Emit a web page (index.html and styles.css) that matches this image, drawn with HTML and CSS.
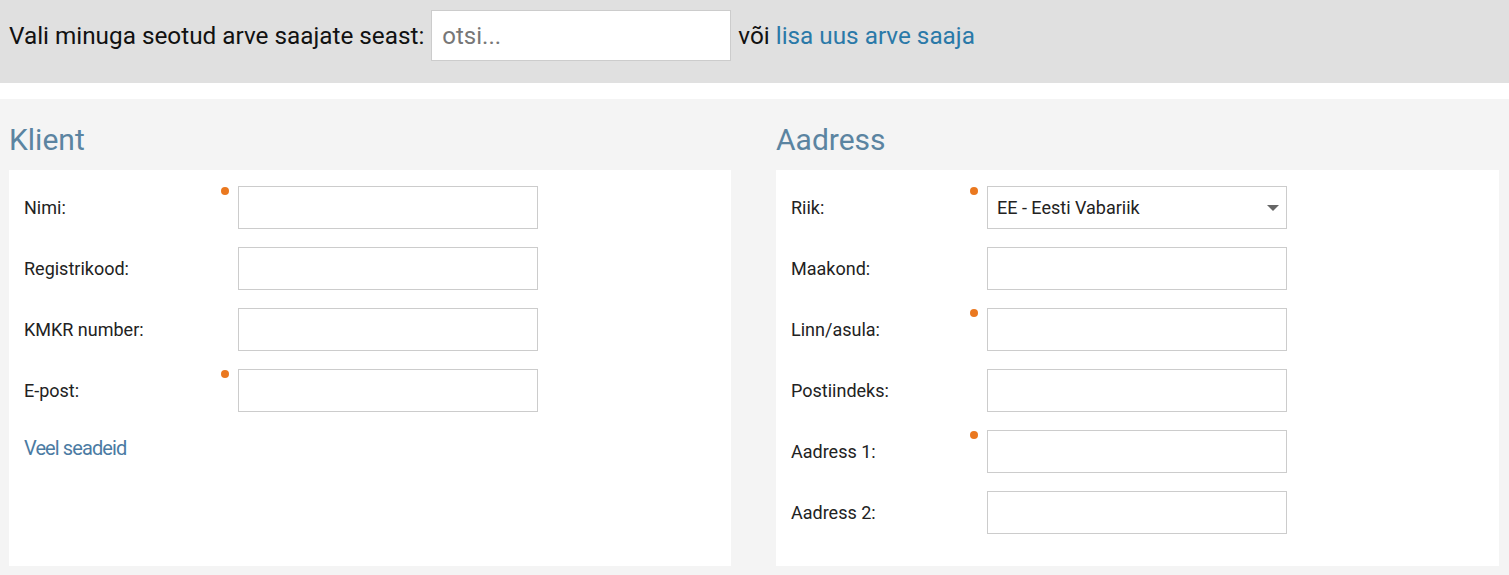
FILE: index.html
```html
<!DOCTYPE html>
<html lang="et">
<head>
    <meta charset="UTF-8">
    <title>Arve saaja</title>
    <link rel="stylesheet" href="styles.css">
</head>
<body>
    <div class="picker">
        <span>Vali minuga seotud arve saajate seast:</span>
        <input type="text" class="picker-search" placeholder="otsi...">
        <span>või <a href="#" class="picker-link">lisa uus arve saaja</a></span>
    </div>

    <div class="forms">
        <div class="form-col">
            <h2 class="form-title">Klient</h2>
            <div class="form-panel">
                <div class="form-row">
                    <label>Nimi:</label>
                    <div class="field required"><input type="text"></div>
                </div>
                <div class="form-row">
                    <label>Registrikood:</label>
                    <div class="field"><input type="text"></div>
                </div>
                <div class="form-row">
                    <label>KMKR number:</label>
                    <div class="field"><input type="text"></div>
                </div>
                <div class="form-row">
                    <label>E-post:</label>
                    <div class="field required"><input type="text"></div>
                </div>
                <a href="#" class="more-link">Veel seadeid</a>
            </div>
        </div>

        <div class="form-col">
            <h2 class="form-title">Aadress</h2>
            <div class="form-panel narrow-labels">
                <div class="form-row">
                    <label>Riik:</label>
                    <div class="field required select-field">
                        <select>
                            <option>EE - Eesti Vabariik</option>
                        </select>
                    </div>
                </div>
                <div class="form-row">
                    <label>Maakond:</label>
                    <div class="field"><input type="text"></div>
                </div>
                <div class="form-row">
                    <label>Linn/asula:</label>
                    <div class="field required"><input type="text"></div>
                </div>
                <div class="form-row">
                    <label>Postiindeks:</label>
                    <div class="field"><input type="text"></div>
                </div>
                <div class="form-row">
                    <label>Aadress 1:</label>
                    <div class="field required"><input type="text"></div>
                </div>
                <div class="form-row">
                    <label>Aadress 2:</label>
                    <div class="field"><input type="text"></div>
                </div>
            </div>
        </div>
    </div>
</body>
</html>
```

FILE: styles.css
```css
body {
    margin: 0;
    font-family: Roboto, 'Liberation Sans', sans-serif;
    color: #222;
    background: #fff;
}
.picker {
    height: 83px;
    box-sizing: border-box;
    padding: 10px 9px;
    background: #e0e0e0;
    display: flex;
    align-items: flex-start;
    gap: 7px;
    font-size: 24.3px;
    line-height: 52px;
    color: #111;
}
.picker-search {
    width: 300px;
    height: 51px;
    box-sizing: border-box;
    padding: 0 10px;
    border: 1px solid #ccc;
    background: #fff;
    font-family: inherit;
    font-size: 24px;
    color: #333;
    outline: none;
}
.picker-search::placeholder {
    color: #777;
}
.picker-link {
    color: #2a79a8;
    text-decoration: none;
}
.forms {
    margin-top: 16px;
    background: #f4f4f4;
    display: grid;
    grid-template-columns: 722px 723px;
    gap: 45px;
    padding: 0 10px 9px 9px;
}
.form-title {
    margin: 0;
    padding: 25px 0 14px;
    font-size: 30px;
    line-height: 32px;
    font-weight: normal;
    color: #5b84a1;
}
.form-panel {
    background: #fff;
    height: 396px;
    box-sizing: border-box;
    padding: 16px 15px;
    display: flex;
    flex-direction: column;
    gap: 18px;
    --label-width: 214px;
}
.narrow-labels {
    --label-width: 196px;
}
.form-row {
    display: flex;
    align-items: center;
    height: 43px;
}
.form-row label {
    width: var(--label-width);
    flex-shrink: 0;
    font-size: 18px;
    color: #222;
}
.field {
    position: relative;
}
.field input,
.field select {
    display: block;
    width: 300px;
    height: 43px;
    box-sizing: border-box;
    border: 1px solid #ccc;
    background: #fff;
    padding: 0 9px;
    font-family: inherit;
    font-size: 18px;
    color: #222;
    outline: none;
}
.field select {
    appearance: none;
    -webkit-appearance: none;
    border-radius: 0;
}
.required::before {
    content: '';
    position: absolute;
    left: -17px;
    top: 1px;
    width: 8px;
    height: 8px;
    border-radius: 50%;
    background: #ea781f;
}
.select-field::after {
    content: '';
    position: absolute;
    right: 8px;
    top: 19px;
    border-left: 6px solid transparent;
    border-right: 6px solid transparent;
    border-top: 6px solid #666;
    pointer-events: none;
}
.more-link {
    margin-top: 6px;
    font-size: 20px;
    letter-spacing: -0.9px;
    color: #4b7ba3;
    text-decoration: none;
}
```
